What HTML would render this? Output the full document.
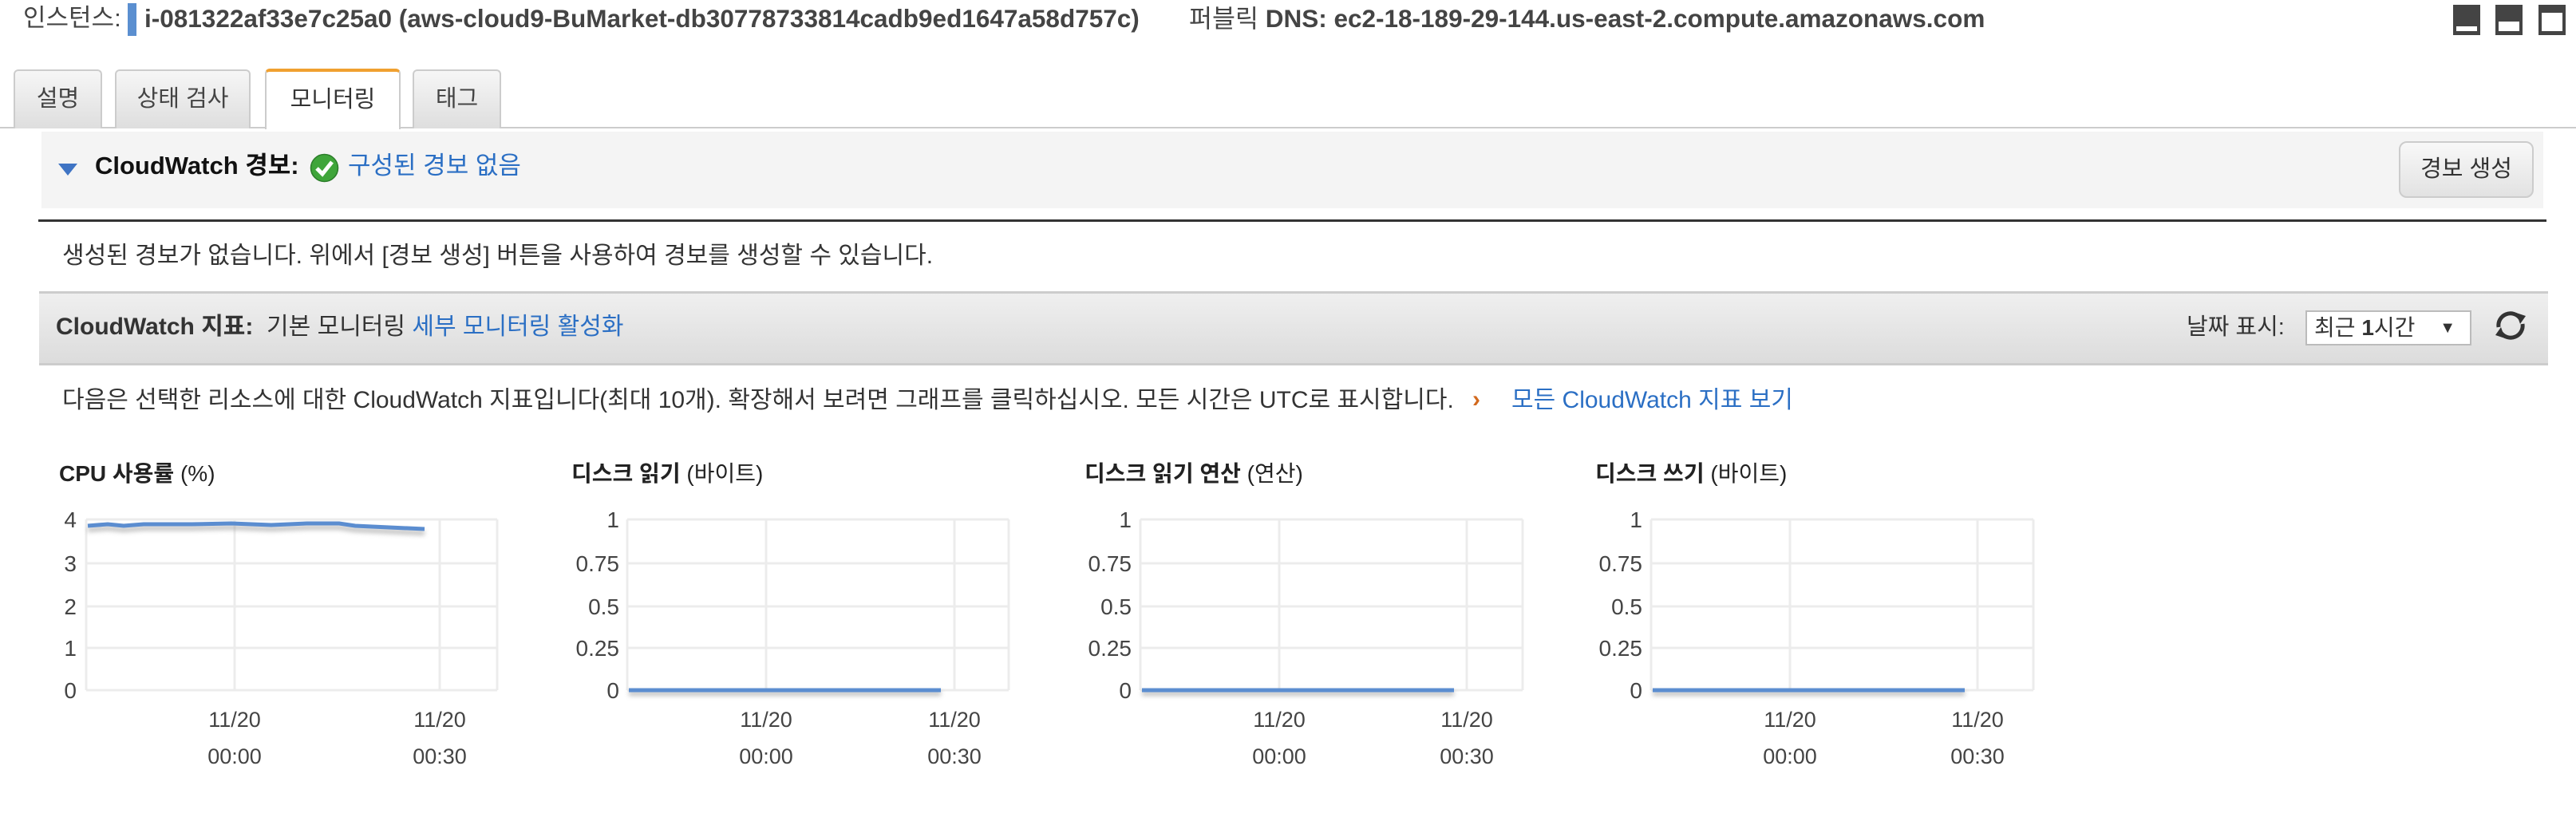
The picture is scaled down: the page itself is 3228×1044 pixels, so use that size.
<!DOCTYPE html>
<html><head><meta charset="utf-8"><style>
*{margin:0;padding:0;box-sizing:border-box}
body{width:3228px;height:1044px;background:#fff;position:relative;overflow:hidden;font-family:"Liberation Sans","Noto Sans CJK KR",sans-serif;color:#333}
.a{position:absolute;white-space:nowrap}
.tab{position:absolute;top:87px;height:74px;border:2px solid #ccc;border-bottom:none;border-radius:6px 6px 0 0;background:linear-gradient(#f6f6f6,#dedede);font-size:29px;color:#444;text-align:center;line-height:70px}
.ic{position:absolute;top:6px;width:34px;height:38px;background:#444}
.ic i{position:absolute;background:#fff;left:4px;right:4px}
a,.lk{color:#2b6fc4;text-decoration:none}
</style></head><body>
<div class="a" style="left:29px;top:3px;font-size:31px;color:#444;line-height:40px">인스턴스:</div>
<div class="a" style="left:160px;top:4px;width:11px;height:41px;background:#5b8fd0"></div>
<div class="a" style="left:181px;top:3px;font-size:31.5px;font-weight:bold;color:#444;line-height:40px">i-081322af33e7c25a0 (aws-cloud9-BuMarket-db30778733814cadb9ed1647a58d757c)</div>
<div class="a" style="left:1490px;top:3px;font-size:31.5px;color:#444;line-height:40px">퍼블릭 <b>DNS:</b> <b>ec2-18-189-29-144.us-east-2.compute.amazonaws.com</b></div>
<div class="ic" style="left:3074px"><i style="bottom:5px;height:6px"></i></div>
<div class="ic" style="left:3127px"><i style="bottom:5px;height:12px"></i></div>
<div class="ic" style="left:3181px"><i style="bottom:5px;top:10px"></i></div>

<div class="a" style="left:0;top:159px;width:3228px;height:2px;background:#ccc"></div>
<div class="tab" style="left:17px;width:111px">설명</div>
<div class="tab" style="left:144px;width:170px">상태 검사</div>
<div class="tab" style="left:332px;width:170px;background:#fff;border-top:4px solid #f0a030;height:76px;top:86px;color:#333">모니터링</div>
<div class="tab" style="left:517px;width:111px">태그</div>

<div class="a" style="left:52px;top:165px;width:3135px;height:96px;background:#f4f4f4"></div>
<div class="a" style="left:48px;top:275px;width:3143px;height:3px;background:#333"></div>
<svg class="a" style="left:73px;top:205px" width="24" height="16"><polygon points="0,0 24,0 12,15" fill="#3f74c4"/></svg>
<div class="a" style="left:119px;top:188px;font-size:31px;font-weight:bold;color:#111;line-height:40px">CloudWatch 경보:</div>
<svg class="a" style="left:388px;top:192px" width="37" height="37"><circle cx="18.5" cy="18.5" r="17" fill="#3fa53a" stroke="#2c7d2a" stroke-width="1.5"/><path d="M9 19 L16 26 L28 11" stroke="#fff" stroke-width="5" fill="none"/></svg>
<div class="a lk" style="left:436px;top:188px;font-size:31px;line-height:40px">구성된 경보 없음</div>
<div class="a" style="left:3006px;top:177px;width:169px;height:71px;border:2px solid #ccc;border-radius:10px;background:linear-gradient(#f8f8f8,#e2e2e2);font-size:29px;color:#333;text-align:center;line-height:67px">경보 생성</div>

<div class="a" style="left:78px;top:301px;font-size:30px;color:#333;line-height:40px">생성된 경보가 없습니다. 위에서 [경보 생성] 버튼을 사용하여 경보를 생성할 수 있습니다.</div>

<div class="a" style="left:49px;top:365px;width:3144px;height:93px;border-top:3px solid #ccc;border-bottom:3px solid #ccc;background:linear-gradient(#efefef,#dcdcdc)"></div>
<div class="a" style="left:70px;top:390px;font-size:30px;line-height:40px;color:#333"><b>CloudWatch 지표:</b>&nbsp; 기본 모니터링 <span class="lk">세부 모니터링 활성화</span></div>
<div class="a" style="left:2740px;top:390px;font-size:29px;line-height:40px;color:#333">날짜 표시:</div>
<div class="a" style="left:2889px;top:389px;width:208px;height:44px;border:2px solid #bbb;background:#fff;font-size:28px;line-height:40px;padding-left:9px;color:#333">최근 <b>1</b>시간<span style="position:absolute;right:18px;font-size:20px">▼</span></div>
<svg class="a" style="left:3122px;top:386px" width="48" height="44" viewBox="0 0 48 44"><path d="M9 24 A15 15 0 0 1 36 13" stroke="#333" stroke-width="5" fill="none"/><polygon points="31,6 43,10 36,20" fill="#333"/><path d="M39 20 A15 15 0 0 1 12 31" stroke="#333" stroke-width="5" fill="none"/><polygon points="17,38 5,34 12,24" fill="#333"/></svg>

<div class="a" style="left:78px;top:482px;font-size:30px;line-height:40px;color:#333">다음은 선택한 리소스에 대한 CloudWatch 지표입니다(최대 10개). 확장해서 보려면 그래프를 클릭하십시오. 모든 시간은 UTC로 표시합니다.</div>
<div class="a" style="left:1845px;top:481px;font-size:30px;line-height:40px;color:#d2691e;font-weight:bold">›</div>
<div class="a lk" style="left:1894px;top:482px;font-size:30px;line-height:40px">모든 CloudWatch 지표 보기</div>

<svg class="a" style="left:0;top:560px" width="3228" height="440" font-family="Liberation Sans, Noto Sans CJK KR, sans-serif" fill="#444">
<defs><filter id="sh"><feGaussianBlur stdDeviation="3"/></filter></defs>
<g font-size="28" fill="#222">
<text x="74" y="43"><tspan font-weight="bold">CPU 사용률</tspan> (%)</text>
<text x="716" y="43"><tspan font-weight="bold">디스크 읽기</tspan> (바이트)</text>
<text x="1359" y="43"><tspan font-weight="bold">디스크 읽기 연산</tspan> (연산)</text>
<text x="1999" y="43"><tspan font-weight="bold">디스크 쓰기</tspan> (바이트)</text>
</g>
<g stroke="#ececec" stroke-width="3" fill="none">
<path d="M108 91H623M108 146H623M108 200H623M108 252H623M108 305H623M108 91V305M294 91V305M551 91V305M623 91V305"/>
<path d="M786 91H1264M786 146H1264M786 200H1264M786 252H1264M786 305H1264M786 91V305M960 91V305M1196 91V305M1264 91V305"/>
<path d="M1429 91H1908M1429 146H1908M1429 200H1908M1429 252H1908M1429 305H1908M1429 91V305M1603 91V305M1838 91V305M1908 91V305"/>
<path d="M2069 91H2548M2069 146H2548M2069 200H2548M2069 252H2548M2069 305H2548M2069 91V305M2243 91V305M2478 91V305M2548 91V305"/>
</g>
<g font-size="28" text-anchor="end">
<text x="96" y="101">4</text><text x="96" y="156">3</text><text x="96" y="210">2</text><text x="96" y="262">1</text><text x="96" y="315">0</text>
<text x="776" y="101">1</text><text x="776" y="156">0.75</text><text x="776" y="210">0.5</text><text x="776" y="262">0.25</text><text x="776" y="315">0</text>
<text x="1418" y="101">1</text><text x="1418" y="156">0.75</text><text x="1418" y="210">0.5</text><text x="1418" y="262">0.25</text><text x="1418" y="315">0</text>
<text x="2058" y="101">1</text><text x="2058" y="156">0.75</text><text x="2058" y="210">0.5</text><text x="2058" y="262">0.25</text><text x="2058" y="315">0</text>
</g>
<g font-size="27" text-anchor="middle">
<text x="294" y="351">11/20</text><text x="551" y="351">11/20</text><text x="294" y="397">00:00</text><text x="551" y="397">00:30</text>
<text x="960" y="351">11/20</text><text x="1196" y="351">11/20</text><text x="960" y="397">00:00</text><text x="1196" y="397">00:30</text>
<text x="1603" y="351">11/20</text><text x="1838" y="351">11/20</text><text x="1603" y="397">00:00</text><text x="1838" y="397">00:30</text>
<text x="2243" y="351">11/20</text><text x="2478" y="351">11/20</text><text x="2243" y="397">00:00</text><text x="2478" y="397">00:30</text>
</g>
<g stroke="#999" stroke-width="6" fill="none" filter="url(#sh)" opacity="0.6">
<path d="M110 104 L135 102 L155 104 L180 102 L240 102 L290 101 L340 103 L385 101 L425 101 L445 104 L532 108"/>
<path d="M788 309H1179M1431 309H1822M2071 309H2462"/>
</g>
<g stroke="#5b8dd0" stroke-width="5" fill="none">
<path d="M110 99 L135 97 L155 99 L180 97 L240 97 L290 96 L340 98 L385 96 L425 96 L445 99 L532 103"/>
<path d="M788 305H1179M1431 305H1822M2071 305H2462"/>
</g>
</svg>
</body></html>
